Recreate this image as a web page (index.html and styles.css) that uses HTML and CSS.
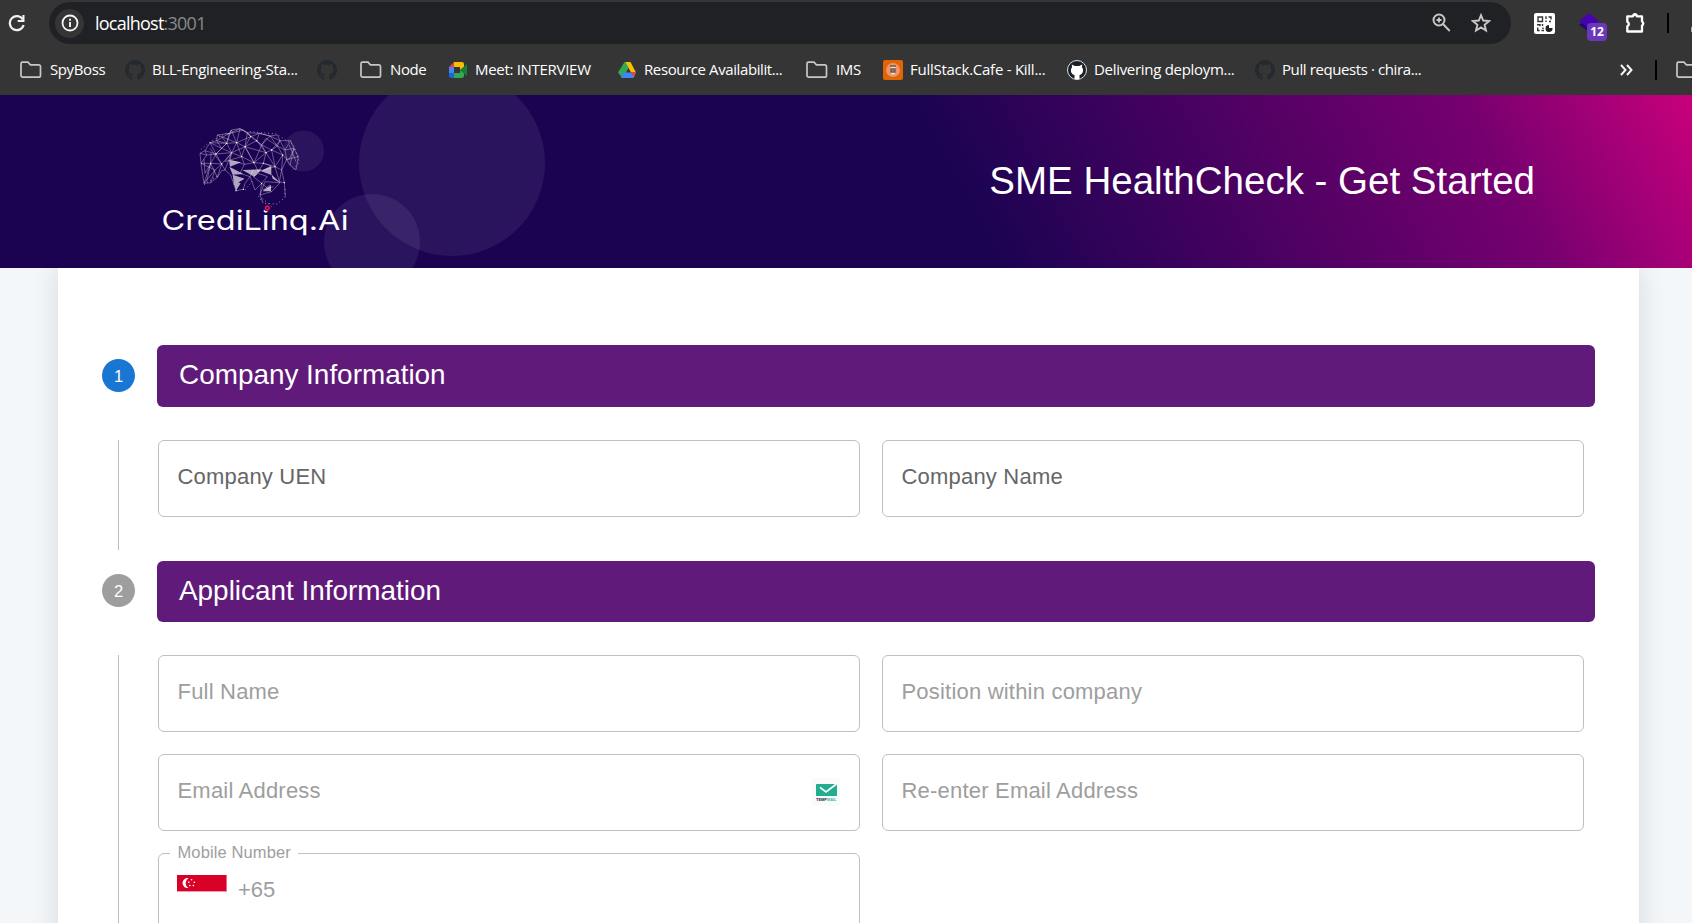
FILE: index.html
```
<!DOCTYPE html>
<html lang="en">
<head>
<meta charset="utf-8">
<title>SME HealthCheck - Get Started</title>
<link rel="stylesheet" href="styles.css">
</head>
<body>
<svg width="0" height="0" class="defs" aria-hidden="true">
  <symbol id="folder" viewBox="0 0 22 20"><path d="M2.5 2.2H8l2.4 2.6h8.4a1.7 1.7 0 0 1 1.7 1.7v9a1.7 1.7 0 0 1-1.7 1.7H2.7A1.7 1.7 0 0 1 1 15.500V3.700a1.500 1.500 0 0 1 1.500-1.500z" fill="none" stroke="#c7c7c7" stroke-width="1.700"/></symbol>
  <symbol id="github" viewBox="0 0 16 16"><path d="M8 0C3.580 0 0 3.580 0 8c0 3.540 2.290 6.530 5.470 7.590.4.070.55-.17.55-.38 0-.19-.01-.82-.01-1.490-2.010.37-2.530-.49-2.690-.94-.09-.23-.48-.94-.82-1.130-.28-.15-.68-.52-.01-.53.63-.01 1.080.58 1.230.82.72 1.210 1.870.87 2.330.66.070-.52.28-.87.51-1.070-1.780-.2-3.640-.89-3.640-3.950 0-.87.31-1.590.82-2.150-.08-.2-.36-1.020.08-2.120 0 0 .67-.21 2.200.82a7.600 7.600 0 0 1 4 0c1.530-1.040 2.200-.82 2.200-.82.44 1.100.16 1.920.08 2.120.51.56.82 1.270.82 2.150 0 3.070-1.870 3.750-3.650 3.950.29.25.54.73.54 1.480 0 1.070-.01 1.930-.01 2.200 0 .21.15.46.55.38A8 8 0 0 0 16 8c0-4.420-3.580-8-8-8z" fill="currentColor"/></symbol>
</svg>

<div class="browser">
  <div class="toolbar">
    <svg class="reload" width="18" height="18" viewBox="0 0 18 18"><path d="M14.800 5.500A7 7 0 1 0 15.600 11" fill="none" stroke="#f1f1f1" stroke-width="2.200"/><path d="M16.500 1v7H9.700V6h4.700V1z" fill="#f1f1f1"/></svg>
    <div class="omnibox">
      <span class="info"><svg width="18" height="18" viewBox="0 0 18 18"><circle cx="9" cy="9" r="7.500" fill="none" stroke="#f4f4f4" stroke-width="1.800"/><path d="M9 8v5M9 4.800v1.900" stroke="#f4f4f4" stroke-width="1.900"/></svg></span>
      <span class="url"><b>localhost</b><i>:3001</i></span>
      <svg class="lens" width="19" height="20" viewBox="0 0 19 20"><circle cx="7" cy="7" r="5.500" fill="none" stroke="#c7c7c7" stroke-width="2"/><path d="M11 11l6.700 7M7 4.500v5M4.500 7h5" stroke="#c7c7c7" stroke-width="1.900"/></svg>
      <svg class="star" width="20" height="20" viewBox="0 0 20 20"><path d="M10 2.200l2.200 5.300 5.900.5-4.500 3.800 1.400 5.700-5-3.100-5 3.100 1.400-5.700L1.900 8l5.900-.5z" fill="none" stroke="#c7c7c7" stroke-width="1.900"/></svg>
    </div>
    <svg class="qr" width="21" height="21" viewBox="0 0 21 21"><rect width="21" height="21" rx="2" fill="#fff"/><g fill="none" stroke="#333" stroke-width="1.400"><path d="M4 4h4.500v4.500H4zM12 3.300v2.700M12 7.500v1.500M14.500 4h2.500v2.500M15 8.500h2M3 11.700h3v1.600M8.500 11v2M3.700 14.500v3h2M7.500 17.500h2.500M9 14.500v1.500"/></g><path d="M15 12v3h3.500a3.500 3.500 0 1 1-3.500-3z" fill="#222"/></svg>
    <span class="ext"><svg width="24" height="20" viewBox="0 0 24 20"><path d="M0 12l4-3 9 5-3 5z" fill="#1f0870"/><path d="M0 8l10-8 10 8-10 7z" fill="#4704ae"/></svg><span class="count">12</span></span>
    <svg class="puzzle" width="22" height="22" viewBox="0 0 22 22"><path d="M2.300 4.300h5.500a2.200 2.200 0 0 1 4.200 0h5v5.200a2.200 2.200 0 0 1 0 4v6H2.300v-5.200a2.500 2.500 0 0 0 0-4.600z" fill="none" stroke="#fff" stroke-width="2.300" stroke-linejoin="round"/><path d="M7.500 3.500a2.500 2.500 0 0 1 5 0zM17 9a2.700 2.700 0 0 1 0 5.200z" fill="#fff"/></svg>
    <span class="rule"></span>
    <span class="sliver"></span>
  </div>
  <div class="bookmarks">
    <span class="mark f"><svg><use href="#folder"/></svg><em>SpyBoss</em></span>
    <span class="mark dark"><svg><use href="#github"/></svg><em class="wide-text">BLL-Engineering-Sta...</em></span>
    <span class="mark dark"><svg><use href="#github"/></svg></span>
    <span class="mark f"><svg><use href="#folder"/></svg><em>Node</em></span>
    <span class="mark"><svg viewBox="0 0 20 20"><path d="M6 2v5H1z" fill="#ea4335"/><path d="M1 7h5v6H1z" fill="#4285f4"/><path d="M1 13h5v5H3q-2 0-2-2z" fill="#1967d2"/><path d="M6 2h8q2 0 2 2v3l-4 3V7H6z" fill="#fbbc04"/><path d="M6 13h6v-3l4 3v3q0 2-2 2H6z" fill="#34a853"/><path d="M12 10l7-6v12z" fill="#188038"/></svg><em class="mid-text">Meet: INTERVIEW</em></span>
    <span class="mark"><svg viewBox="0 0 20 20"><path d="M6.500 2h3l2.200 4-6 10.500H3L0 12.500z" fill="#34a853"/><path d="M7.500 2h5l5.500 10.500h-5z" fill="#fbbc04"/><path d="M5.500 12.500H18L15.500 18H3z" fill="#4285f4"/><path d="M12.500 12.500H18l-2 4.500z" fill="#ea4335"/></svg><em class="shift">Resource Availabilit...</em></span>
    <span class="mark f"><svg><use href="#folder"/></svg><em>IMS</em></span>
    <span class="mark"><svg viewBox="0 0 20 20"><rect width="20" height="20" rx="2" fill="#df6507"/><circle cx="10" cy="10" r="7" fill="#ef9568"/><path d="M7.500 6.500h5l-.8 8H8.300z" fill="#f9ddc5"/><path d="M7 6h6M8 9h4v3H8z" stroke="#665d5a" stroke-width="1.400" fill="#d36e3c"/></svg><em class="wide-text">FullStack.Cafe - Kill...</em></span>
    <span class="mark light"><svg viewBox="0 0 20 20"><circle cx="10" cy="10" r="9.500" fill="#182129" stroke="#ddd"/><path d="M7.500 19v-4C3 14 3.500 8.500 5 7.500L4.800 4.500l3 1.400h4.400l3-1.400-.2 3c1.500 1 2 6.500-2.500 7.500v4q-2.500.7-5 0z" fill="#fff"/></svg><em class="mid-text">Delivering deploym...</em></span>
    <span class="mark dark"><svg><use href="#github"/></svg><em>Pull requests · chira...</em></span>
    <svg class="more" width="13" height="12" viewBox="0 0 13 12"><path d="M1 1l4.500 5L1 11M7 1l4.500 5L7 11" fill="none" stroke="#f4f4f4" stroke-width="2"/></svg>
    <span class="rule wide"></span>
    <span class="mark f"><svg><use href="#folder"/></svg></span>
  </div>
</div>

<header class="hero">
  <svg class="bubbles" width="600" height="173" viewBox="0 95 600 173" fill="#fff" fill-opacity=".07"><circle cx="452" cy="163" r="93"/><circle cx="372" cy="242" r="48"/><circle cx="303.500" cy="151" r="20.500"/></svg>
  <svg class="logo" width="200" height="140" viewBox="155 115 200 140">
    <g transform="translate(190 120) scale(.33333)" fill="none" stroke="#fff" stroke-opacity=".5" stroke-width="2">
      <path d="M30 100L45 92L60 68L80 62L82 45L118 40L124 30L150 26L172 38L208 40L240 48L262 45L270 62L302 62L312 85L325 110L318 150L300 135L290 118M30 100L33 130L42 190L62 188L82 172L95 152L105 150L122 165L138 212L160 208L165 190L180 170L195 210L215 190L210 225L218 246M283 188L286 230"/>
      <path d="M30 100L50 105L78 102L62 130L33 130L50 105L45 92L78 102L60 68L110 70L80 62L118 40L110 70L78 102L95 132L62 130L42 190L75 150L95 132L125 98L78 102M33 130L75 150L62 188M45 160L62 130L82 172L95 132L105 150L125 98L110 70L140 68L124 30L110 70M118 40L150 26L140 68L165 80L172 38L150 26M82 45L140 68L125 98L165 80L155 110L125 98L120 120L155 110L163 133L120 120M172 38L200 62L165 80M200 62L208 40L182 50L172 38M182 50L165 80L192 128L155 110M200 62L215 75L228 98L192 128L165 80L228 98L200 62M208 40L240 48L215 75L245 90L228 98L220 130L192 128L205 155L220 130L255 140L228 98M245 90L255 140L278 105L245 90L262 78L240 48L270 62L262 78L278 105L290 118L285 90L262 78M270 62L285 90L302 62M285 90L312 85L298 118L290 118L325 110M312 85L300 135M278 105L275 150L255 140L268 185L275 150L290 118M192 128L163 133L150 160L180 170L190 150M220 130L243 137M215 190L190 170L205 160L232 170L215 190L245 215L270 188L225 185L210 225L245 215M240 195L220 210L250 200M275 150L283 188L268 185M95 50L110 70M110 43L160 30L182 50M60 85L95 132M42 118L45 160M63 100L62 130L50 185M298 75L318 125M60 68L95 85L125 98M80 62L95 85L78 102M95 85L110 70M140 68L155 110M182 50L215 75L192 128M215 75L228 55L262 78M140 68L182 50M245 90L270 62M205 155L255 140M125 98L105 125L120 120"/>
      <g fill="#fff" fill-opacity=".65" stroke="none"><path d="M117 120L153 127L120 140zM118 140L160 162L128 164zM157 150L215 148L193 170zM212 153L244 137V165zM244 163L272 190L248 176zM128 164L164 176L132 195zM130 182L152 190L138 212zM218 214L243 195V214z"/></g>
      <path stroke-opacity="1" stroke-width="4" stroke-linecap="round" d="M78 102h.1M62 130h.1M95 132h.1M110 70h.1M140 68h.1M165 80h.1M155 110h.1M200 62h.1M228 98h.1M192 128h.1M245 90h.1M255 140h.1M278 105h.1M220 130h.1M182 50h.1M215 190h.1M283 188h.1M138 212h.1M160 208h.1"/>
      <path stroke-opacity=".8" stroke-width="3" stroke-dasharray="2 9" d="M33 88L62 64L112 38M180 35L260 42L310 75L328 125L305 155M42 194L85 165M205 228L220 250L262 252L285 232L285 200M165 210L190 180M218 236l28 25"/>
    </g>
    <text class="word" x="161.500" y="229.500" textLength="187" lengthAdjust="spacingAndGlyphs">CrediLinq.Ai</text>
    <circle cx="267.300" cy="208" r="3.300" fill="#1b0352"/><circle cx="267.300" cy="208" r="1.800" fill="none" stroke="#f5105f" stroke-width="1.500"/>
  </svg>
  <h1>SME HealthCheck - Get Started</h1>
</header>

<main class="page">
  <form class="card">
    <section class="step first">
      <div class="step-head"><span class="badge active">1</span><h2>Company Information</h2></div>
      <div class="step-body">
        <div class="field"><label>Company UEN</label></div>
        <div class="field"><label>Company Name</label></div>
      </div>
    </section>
    <section class="step second">
      <div class="step-head"><span class="badge">2</span><h2>Applicant Information</h2></div>
      <div class="step-body muted">
        <div class="field"><label>Full Name</label></div>
        <div class="field"><label>Position within company</label></div>
        <div class="field"><label>Email Address</label>
          <svg class="mail" width="28" height="28" viewBox="0 0 28 28"><rect width="28" height="28" rx="3" fill="#fafafa"/><rect x="4" y="6" width="21" height="12" rx=".6" fill="#22ad91"/><path d="M8 9.300l6 4.700L24.500 6" fill="none" stroke="#fff" stroke-width="1.700"/><text class="tiny" x="4" y="22.500" textLength="20.500" lengthAdjust="spacingAndGlyphs"><tspan fill="#17233f">TEMP</tspan><tspan fill="#36b79f">MAIL</tspan></text></svg>
        </div>
        <div class="field"><label>Re-enter Email Address</label></div>
        <div class="field phone"><span class="legend">Mobile Number</span>
          <svg class="flag" width="50" height="17" viewBox="0 0 50 17"><rect width="50" height="17" fill="#ef9bab"/><rect width="49.300" height="16" fill="#d80027"/><path d="M11.500 3.200a5 5 0 1 0 0 9.800a5.600 5.600 0 0 1 0-9.800z" fill="#fff"/><path d="M14.500 4.700h.1M11.800 7.200h.1M17.300 7.200h.1M12.800 10.500h.1M16.300 10.500h.1" stroke="#fff" stroke-width="1.600" stroke-linecap="round"/></svg>
          <span class="code">+65</span>
        </div>
      </div>
    </section>
  </form>
</main>
</body>
</html>
```
FILE: styles.css
```
* { box-sizing: border-box; }
html, body { margin: 0; height: 923px; overflow: hidden; }
body { font-family: "Liberation Sans", Arial, sans-serif; background: #f3f7fa; display: flex; flex-direction: column; }
.defs { position: absolute; }
svg { display: block; flex: none; }

.browser { height: 95px; flex: none; background: #353535; overflow: hidden; }
.toolbar { height: 46px; display: flex; align-items: center; padding: 0 0 0 8px; width: 1720px; }
.reload { margin-right: 23px; }
.omnibox { width: 1462px; height: 42px; border-radius: 21px; background: #202124; display: flex; align-items: center; padding: 0 20px 0 6px; }
.info { width: 29px; height: 29px; border-radius: 50%; background: #353535; display: grid; place-items: center; margin-right: 11px; }
.url { flex: 1; font: 18px/24px "Open Sans", "Noto Sans", sans-serif; letter-spacing: -.76px; color: #fff; white-space: nowrap; }
.url b, .url i, .mark em { font-weight: 400; font-style: normal; }
.url i { color: #878a8e; }
.lens { margin-right: 20px; }
.qr { margin-left: 23px; }
.ext { margin-left: 24px; width: 46px; height: 20px; position: relative; }
.count { position: absolute; left: 8px; top: 10px; width: 20px; height: 18px; border-radius: 4px; background: #6b37bd; color: #fff; font: bold 12px/18px "Open Sans", sans-serif; text-align: center; }
.rule { width: 2px; height: 20px; background: #000; margin-left: 20px; flex: none; }
.sliver { width: 3px; height: 5px; margin: 12px 0 0 22px; background: #aaa; flex: none; }

.bookmarks { height: 48px; width: 1720px; padding-left: 20px; display: grid; align-items: center; grid-template-columns: 105px 192px 43px 88px 170px 188px 77px 184px 188px 365px 35px 21px 22px; }
.mark { display: flex; align-items: center; gap: 7px; height: 24px; }
.mark svg { width: 20px; height: 20px; }
.mark.f { gap: 8px; }
.mark.f svg { width: 22px; }
.mark.dark svg { color: #24292f; }
.mark em { font: 15px/20px "Open Sans", "Noto Sans", sans-serif; letter-spacing: -.4px; color: #fff; white-space: nowrap; padding-bottom: 2px; }
.mark .wide-text { letter-spacing: -.26px; }
.mark .mid-text { letter-spacing: -.3px; }
.mark .shift { margin-left: -1px; }
.rule.wide { margin: 0; }

.hero { height: 173px; flex: none; position: relative; display: flex; align-items: flex-start; justify-content: space-between; padding: 20px 157px 0 155px; background: linear-gradient(62.5deg, #1b0352 56%, #76006f 87%, #c8007c 100%); }
.bubbles { position: absolute; left: 0; top: 0; }
.logo { position: relative; }
.word { font: 400 27px "Inter", sans-serif; fill: #fff; }
.tiny { font: bold 4px "Liberation Sans", sans-serif; }
.hero h1 { margin: 44px 0 0; font-size: 38.500px; line-height: 44px; font-weight: 400; color: #fff; white-space: nowrap; }

.page { height: 655px; overflow: hidden; padding: 0 53px 0 58px; }
.card { height: 700px; background: #fff; box-shadow: 0 0 26px rgba(0, 20, 30, .13); padding: 77px 44px 0; }
.step-head { display: grid; grid-template-columns: 33px 1438px; column-gap: 22px; align-items: center; height: 62px; }
.second .step-head { height: 61px; }
.badge { width: 33px; height: 33px; margin-bottom: 2px; border-radius: 50%; background: #9e9e9e; color: #fff; font-size: 16.5px; line-height: 34px; text-align: center; }
.badge.active { background: #1976d2; }
.step-head h2 { margin: 0; align-self: stretch; border-radius: 6px; background: #601a79; color: #fff; font-size: 27.900px; font-weight: 400; line-height: 60px; padding-left: 22px; }
.step-body { margin: 33px 0 11px 16px; height: 110px; border-left: 1px solid #bdbdbd; padding-left: 39px; display: grid; grid-template-columns: 702px 702px; gap: 22px; grid-auto-rows: 77px; align-content: start; }
.second .step-body { height: 400px; }
.field { position: relative; border: 1px solid #bfbfbf; border-radius: 6px; display: flex; align-items: center; justify-content: space-between; padding: 0 19px 3px 18.500px; }
.field label { font-size: 22px; line-height: 26px; letter-spacing: .2px; color: #666; }
.muted .field label, .code, .legend { color: #9e9e9e; }
.mail { position: relative; top: 1px; }
.field.phone { height: 110px; align-items: flex-start; justify-content: flex-start; padding: 21px 18px; gap: 11px; }
.legend { position: absolute; left: 11px; top: -12px; height: 20px; padding: 0 7px 0 7.500px; background: #fff; font-size: 16.500px; line-height: 20px; letter-spacing: .12px; white-space: nowrap; }
.code { font-size: 22px; line-height: 26px; margin-top: 2px; }
```
